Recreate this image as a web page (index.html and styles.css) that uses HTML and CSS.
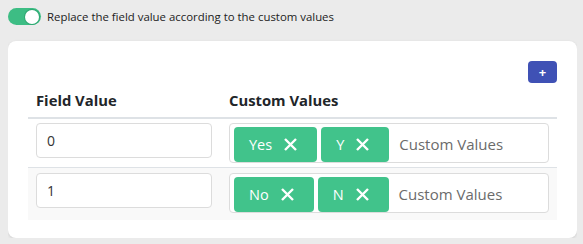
FILE: index.html
```html
<!DOCTYPE html>
<html lang="en">
<head>
    <meta charset="UTF-8">
    <meta name="viewport" content="width=device-width, initial-scale=1.0">
    <title>Custom Values</title>
    <link rel="stylesheet" href="styles.css">
</head>
<body>
    <label class="switch-row">
        <span class="switch on"><span class="knob"></span></span>
        <span class="switch-label">Replace the field value according to the custom values</span>
    </label>

    <div class="card">
        <div class="toolbar">
            <button class="add-btn">+</button>
        </div>
        <table class="values-table">
            <thead>
                <tr>
                    <th class="col-field">Field Value</th>
                    <th>Custom Values</th>
                </tr>
            </thead>
            <tbody>
                <tr>
                    <td><input class="field-input" type="text" value="0"></td>
                    <td>
                        <div class="tags-box">
                            <span class="tag">Yes <svg viewBox="0 0 15 15"><path d="M2 2L13 13M13 2L2 13"/></svg></span>
                            <span class="tag">Y <svg viewBox="0 0 15 15"><path d="M2 2L13 13M13 2L2 13"/></svg></span>
                            <span class="placeholder">Custom Values</span>
                        </div>
                    </td>
                </tr>
                <tr class="striped">
                    <td><input class="field-input" type="text" value="1"></td>
                    <td>
                        <div class="tags-box">
                            <span class="tag">No <svg viewBox="0 0 15 15"><path d="M2 2L13 13M13 2L2 13"/></svg></span>
                            <span class="tag">N <svg viewBox="0 0 15 15"><path d="M2 2L13 13M13 2L2 13"/></svg></span>
                            <span class="placeholder">Custom Values</span>
                        </div>
                    </td>
                </tr>
            </tbody>
        </table>
    </div>
</body>
</html>
```

FILE: styles.css
```css
body {
    margin: 8px 6px 8px 8px;
    background-color: #ebebeb;
    font-family: 'Open Sans', 'Liberation Sans', sans-serif;
    color: #212529;
}

.switch-row {
    display: flex;
    align-items: center;
    gap: 6px;
    height: 17px;
}

.switch {
    position: relative;
    width: 33px;
    height: 17px;
    border-radius: 9px;
    background-color: #3dbd84;
    flex-shrink: 0;
}

.switch .knob {
    position: absolute;
    top: 1.5px;
    right: 2px;
    width: 14px;
    height: 14px;
    border-radius: 50%;
    background-color: #fff;
    box-shadow: 0 0 0 1px #2fa872;
}

.switch-label {
    font-size: 11.4px;
    color: #222;
}

.card {
    margin-top: 16px;
    background-color: #fff;
    border-radius: 8px;
    padding: 20px 20px 18px 20px;
    box-shadow: 0 1px 3px rgba(0,0,0,0.12);
}

.toolbar {
    display: flex;
    justify-content: flex-end;
}

.add-btn {
    width: 29px;
    height: 22px;
    border: none;
    border-radius: 4px;
    background-color: #3f51b5;
    color: #fff;
    font-family: 'Open Sans', sans-serif;
    font-size: 13px;
    font-weight: 700;
    line-height: 22px;
    padding: 0;
}

.values-table {
    width: 100%;
    border-collapse: collapse;
}

.values-table th {
    text-align: left;
    font-size: 14.8px;
    font-weight: 700;
    line-height: 22px;
    padding: 6px 8px;
    border-bottom: 2px solid #dee2e6;
}

.values-table .col-field {
    width: 177px;
}

.values-table td {
    padding: 4px 8px;
    vertical-align: top;
}

.values-table tbody tr + tr td {
    border-top: 1px solid #dee2e6;
}

.values-table tr.striped td {
    background-color: #f9f9f9;
    padding-top: 5px;
    padding-bottom: 7px;
}

.field-input {
    box-sizing: border-box;
    width: 176px;
    height: 35px;
    border: 1px solid #dcdcdc;
    border-radius: 4px;
    padding: 0 10px;
    font-family: 'Open Sans', sans-serif;
    font-size: 14px;
    color: #333;
    background-color: #fff;
}

.tags-box {
    box-sizing: border-box;
    display: flex;
    align-items: flex-start;
    gap: 4px;
    height: 40px;
    padding: 3px 4px 0 4px;
    border: 1px solid #dcdcdc;
    border-radius: 4px;
    background-color: #fff;
}

.tag {
    display: flex;
    align-items: center;
    gap: 11px;
    height: 35px;
    padding: 0 19px 0 15px;
    border-radius: 4px;
    background-color: #41c38b;
    color: #fff;
    font-size: 14.5px;
}

.tag svg {
    width: 15px;
    height: 15px;
    stroke: #fff;
    stroke-width: 2.4;
    fill: none;
}

.placeholder {
    margin-left: 6px;
    line-height: 35px;
    font-size: 15px;
    color: #6b6b6b;
}
```
